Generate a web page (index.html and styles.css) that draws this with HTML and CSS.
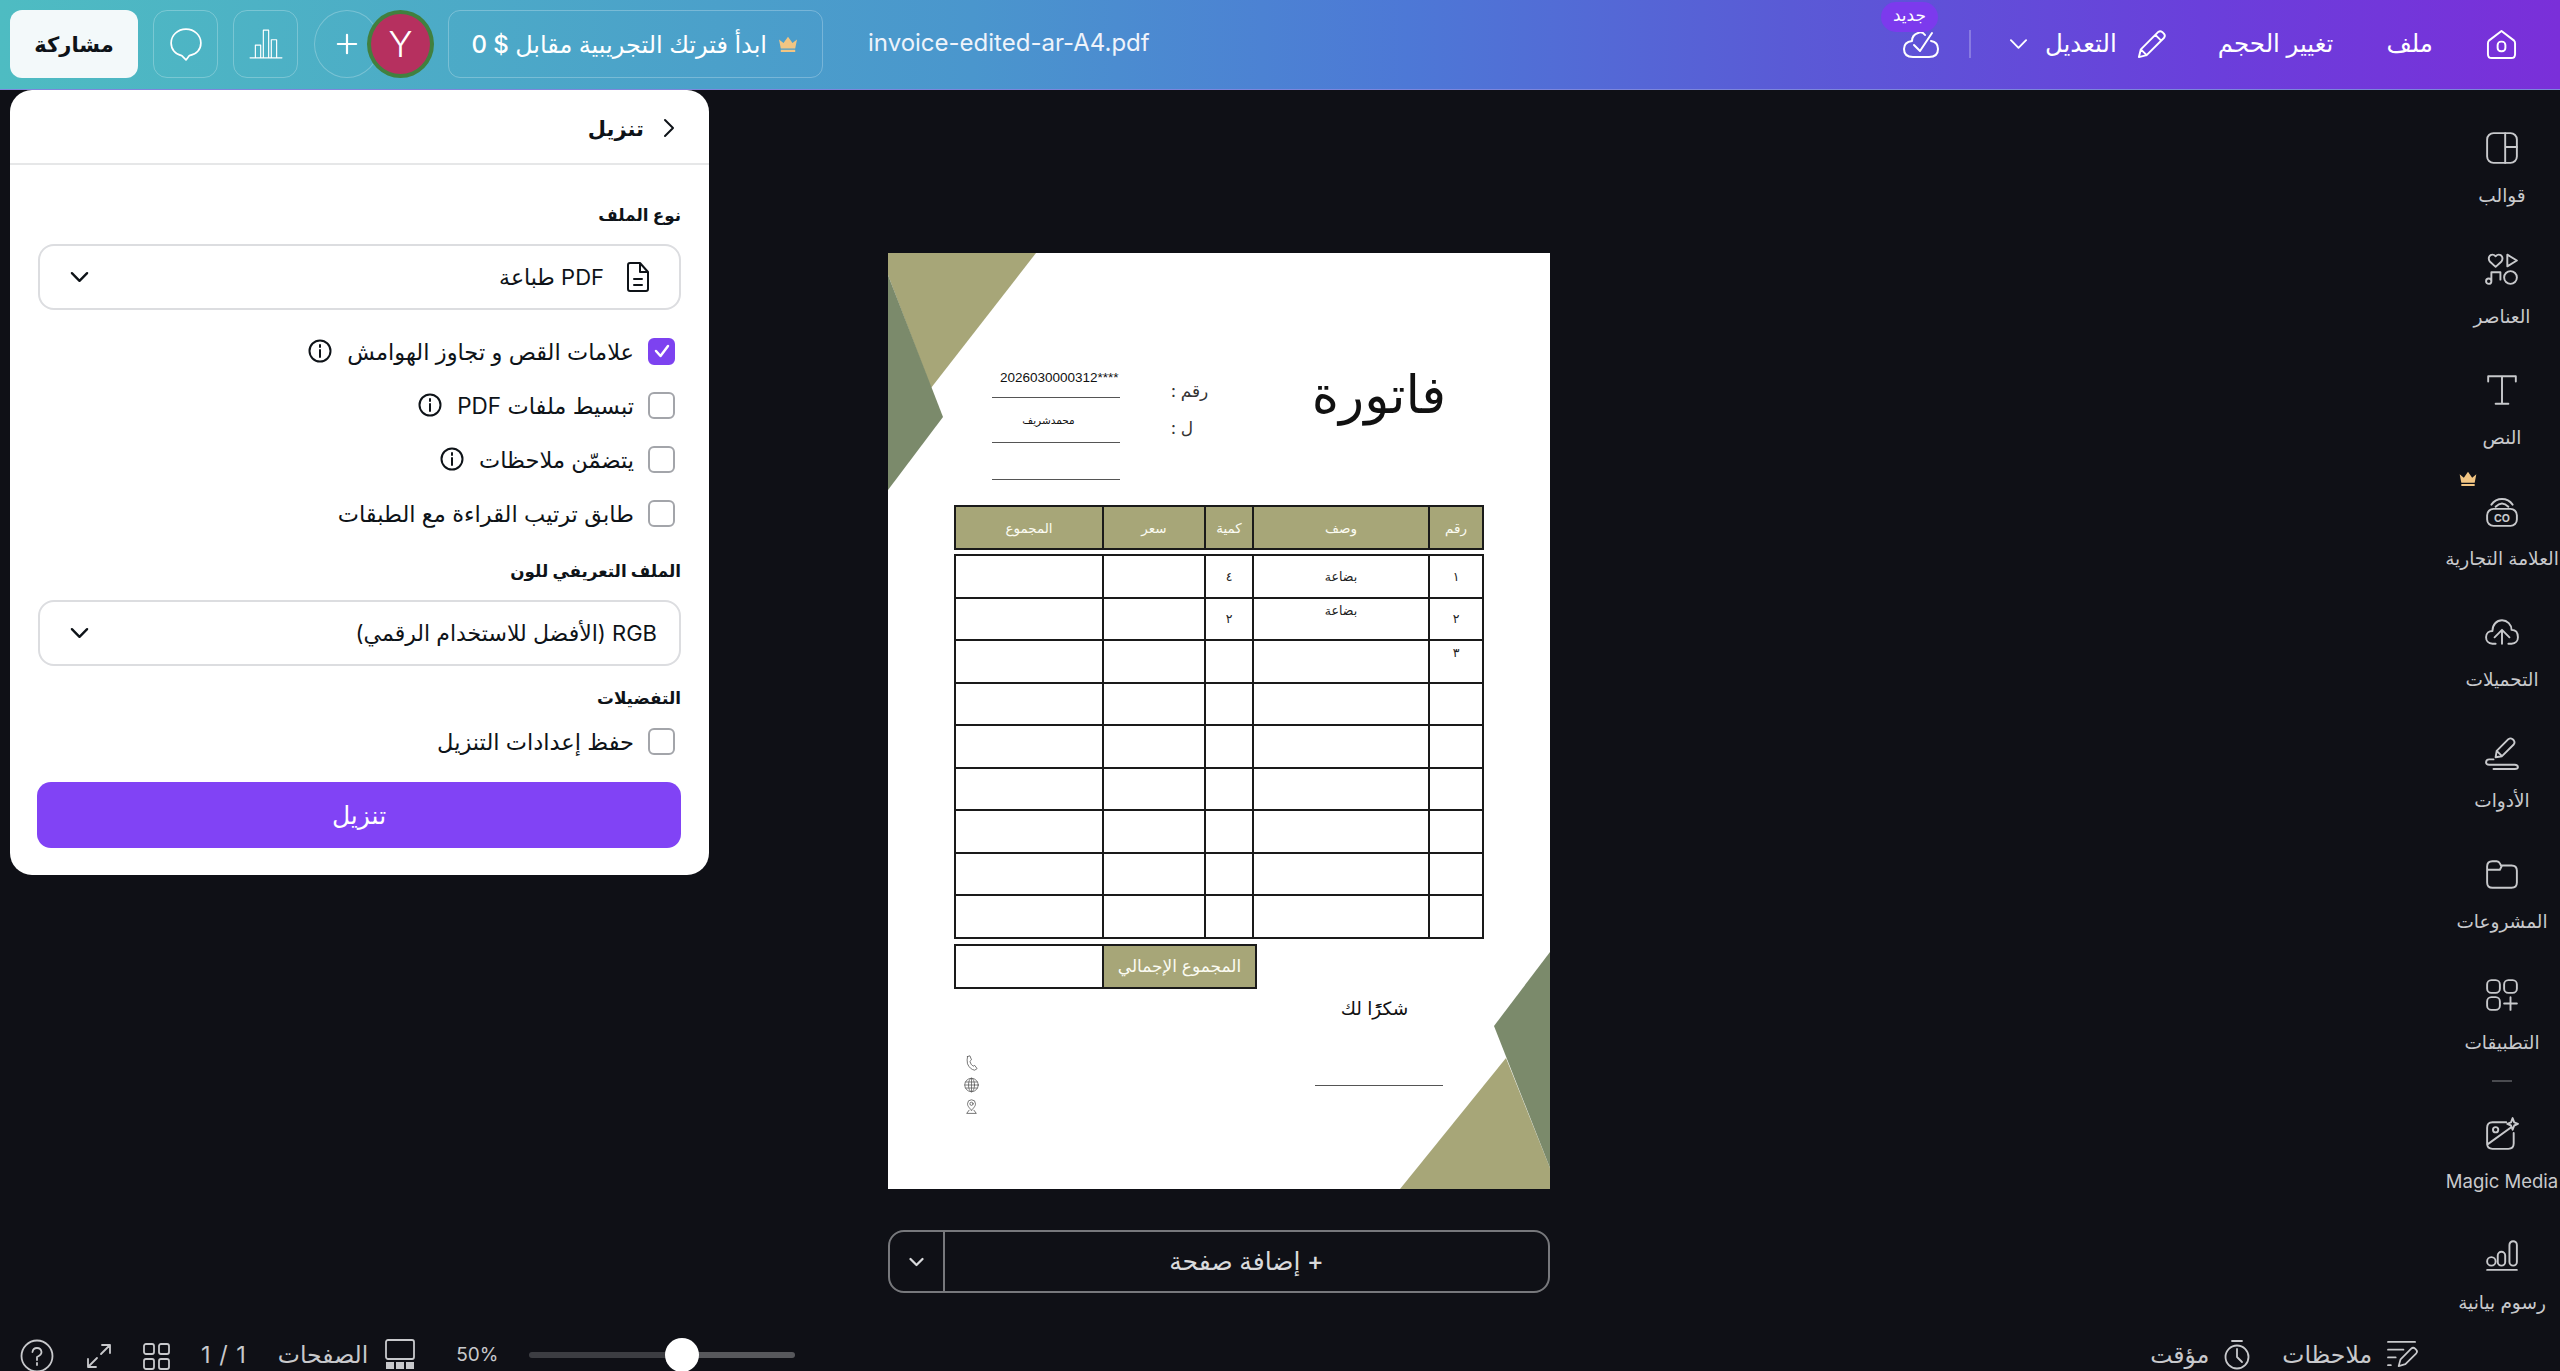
FILE: index.html
```html
<!DOCTYPE html>
<html lang="ar" dir="rtl">
<head>
  <meta charset="UTF-8">
  <title>invoice-edited-ar-A4.pdf</title>
  <link rel="stylesheet" href="styles.css">
</head>
<body>
  <header class="topbar">
    <div class="topbar-group topbar-right">
      <svg class="ico-home" viewBox="0 0 32 32"><path d="M16 2 L29 12 Q30 13 30 15 V26 Q30 30 26 30 H6 Q2 30 2 26 V15 Q2 13 3 12Z"/><rect x="12" y="13" width="8" height="10" rx="3.5"/></svg>
      <span class="top-link link-file">ملف</span>
      <span class="top-link link-resize">تغيير الحجم</span>
      <span class="top-edit">
        <svg class="ico-pencil" viewBox="0 0 32 32"><path d="M3 29 L5 21 L23 3 Q25 1.500 27 3 L29 5 Q30.500 7 29 9 L11 27Z M5 21 L11 27 M20 6 L26 12"/></svg>
        <span class="top-link">التعديل</span>
        <svg class="ico-chev-top" viewBox="0 0 20 12"><path d="M2 2 L10 10 L18 2"/></svg>
      </span>
      <span class="top-divider"></span>
      <span class="cloud-wrap">
        <svg class="ico-cloud" viewBox="0 0 36 28"><path d="M10 27 H26 Q35 27 35 19 Q35 12 28 11 M22 5 Q19 1 15 3 Q9 5 9 11 Q1 12 1 19 Q1 27 10 27"/><path d="M11 15 L17 21 L29 3"/></svg>
        <span class="new-badge">جديد</span>
      </span>
    </div>
    <div class="topbar-group topbar-left">
      <span class="file-name" dir="ltr">invoice-edited-ar-A4.pdf</span>
      <span class="trial-btn">
        <svg class="ico-crown" viewBox="0 0 24 20"><path d="M2 5 L7 9 L12 2 L17 9 L22 5 L20 15 H4Z M4 16.500 H20 V19 H4Z"/></svg>
        ابدأ فترتك التجريبية مقابل $ 0
      </span>
      <span class="avatar">Y</span>
      <span class="plus-btn">
        <svg viewBox="0 0 24 24"><path d="M12 2 V22 M2 12 H22"/></svg>
      </span>
      <span class="icon-btn">
        <svg class="ico-bars" viewBox="0 0 32 32"><path d="M1 29 H31 M6 29 V17 H11 V29 M13.500 29 V3 H18.500 V29 M21 29 V12 H26 V29"/></svg>
      </span>
      <span class="icon-btn">
        <svg viewBox="0 0 32 32"><path d="M16 2 C8 2 2 8 2 15 C2 21 6 26 12 27 L16 31 L19 27 C26 26 30 21 30 15 C30 8 24 2 16 2Z"/></svg>
      </span>
      <span class="share-btn">مشاركة</span>
    </div>
  </header>

  <div class="workspace">
    <nav class="sidebar">
      <div class="side-item">
        <svg viewBox="0 0 32 32"><rect x="2" y="2" width="28" height="28" rx="6"/><path d="M19 2 V30 M19 15 H30"/></svg>
        <span>قوالب</span>
      </div>
      <div class="side-item">
        <svg viewBox="0 0 32 32"><path d="M10 14 L4.500 9 C2.500 6 4 2.500 7 2.500 C8.500 2.500 10 4 10 4 C10 4 11.500 2.500 13 2.500 C16 2.500 17.500 6 15.500 9Z M21 2.500 L30 8 L21 13.500Z M6 27.500 a2.500 2.500 0 1 1 -5 0 a2.500 2.500 0 1 1 5 0 M6 27.500 V19 H14.500 V26"/><circle cx="24" cy="24" r="6"/></svg>
        <span>العناصر</span>
      </div>
      <div class="side-item">
        <svg viewBox="0 0 32 32"><path d="M3 8 V3 H29 V8 M16 3 V29 M10 29 H22"/></svg>
        <span>النص</span>
      </div>
      <div class="side-item">
        <svg class="ico-crown side-crown" viewBox="0 0 24 20"><path d="M2 5 L7 9 L12 2 L17 9 L22 5 L20 15 H4Z M4 16.500 H20 V19 H4Z"/></svg>
        <svg viewBox="0 0 32 32"><rect x="2" y="14" width="28" height="16" rx="6"/><path d="M6 10 C11 3 21 3 26 10 M10 12 C14 8 18 8 22 12"/><text class="co-mark" x="16" y="26" text-anchor="middle">CO</text></svg>
        <span>العلامة التجارية</span>
      </div>
      <div class="side-item">
        <svg viewBox="0 0 32 32"><path d="M10 27 H7 C3 27 1 24 1 21 C1 17 4 15 7 15 C7 9 11 5 16 5 C21 5 25 9 25 14 C29 14 31 17 31 21 C31 24 29 27 25 27 H22 M9 21 L16 14 L23 21 M16 14 V27"/></svg>
        <span>التحميلات</span>
      </div>
      <div class="side-item">
        <svg viewBox="0 0 32 32"><path d="M10 20 L11 14 L22 3 Q24 1.500 26 3 L27 4 Q28.500 6 27 8 L16 19Z M11 14 L16 19 M8 22 H4 Q1 22 1 25 Q1 27 4 27 H28 Q31 27 31 29.500 Q31 31 28 31 H8"/></svg>
        <span>الأدوات</span>
      </div>
      <div class="side-item">
        <svg viewBox="0 0 32 32"><path d="M2 9 Q2 4 7 4 H11 Q13 4 14 6 L15 8 H25 Q30 8 30 13 V24 Q30 29 25 29 H7 Q2 29 2 24Z M2 12 H14 L16 8"/></svg>
        <span>المشروعات</span>
      </div>
      <div class="side-item side-apps">
        <svg viewBox="0 0 32 32"><rect x="2" y="2" width="12" height="12" rx="4"/><rect x="18" y="2" width="12" height="12" rx="4"/><rect x="2" y="18" width="12" height="12" rx="4"/><path d="M24 18 V30 M18 24 H30"/></svg>
        <span>التطبيقات</span>
      </div>
      <div class="side-rule"></div>
      <div class="side-item">
        <svg viewBox="0 0 32 32"><path d="M20 5 H7 Q2 5 2 10 V25 Q2 30 7 30 H22 Q27 30 27 25 V15 M2 26 L27 8"/><circle cx="10" cy="12" r="2.500"/><path class="spark" d="M26 1 L27.500 5 L31 6.500 L27.500 8 L26 12 L24.500 8 L21 6.500 L24.500 5Z"/></svg>
        <span dir="ltr">Magic Media</span>
      </div>
      <div class="side-item">
        <svg viewBox="0 0 32 32"><circle cx="6" cy="22" r="4"/><rect x="12" y="13" width="7" height="13" rx="3.500"/><rect x="23" y="3" width="7" height="23" rx="3.500"/><path d="M2 30 H30"/></svg>
        <span>رسوم بيانية</span>
      </div>
    </nav>

    <main class="canvas">
      <div class="doc">
        <svg class="doc-art" viewBox="0 0 662 936">
          <polygon class="tan" points="0,0 148,0 43,135 0,22"/>
          <polygon class="sage" points="0,22 55,164 0,237"/>
          <polygon class="tan" points="618,805 662,915 662,936 512,936"/>
          <polygon class="sage" points="662,699 606,773 662,915"/>
        </svg>

        <div class="doc-title">فاتورة</div>
        <div class="doc-field field-no">رقم :</div>
        <div class="doc-field field-to">ل :</div>
        <div class="doc-serial" dir="ltr">2026030000312****</div>
        <div class="doc-name">محمدشريف</div>
        <div class="doc-line line-a"></div>
        <div class="doc-line line-b"></div>
        <div class="doc-line line-c"></div>

        <div class="doc-tables">
          <table class="grid grid-head">
            <tr>
              <th class="col-no">رقم</th><th class="col-desc">وصف</th><th class="col-qty">كمية</th><th class="col-price">سعر</th><th class="col-sum">المجموع</th>
            </tr>
          </table>
          <table class="grid grid-body">
            <tr><td class="col-no">١</td><td class="col-desc">بضاعة</td><td class="col-qty">٤</td><td class="col-price"></td><td class="col-sum"></td></tr>
            <tr><td class="col-no">٢</td><td class="col-desc cell-high">بضاعة</td><td class="col-qty">٢</td><td class="col-price"></td><td class="col-sum"></td></tr>
            <tr><td class="col-no cell-high">٣</td><td></td><td></td><td></td><td></td></tr>
            <tr><td></td><td></td><td></td><td></td><td></td></tr>
            <tr><td></td><td></td><td></td><td></td><td></td></tr>
            <tr><td></td><td></td><td></td><td></td><td></td></tr>
            <tr><td></td><td></td><td></td><td></td><td></td></tr>
            <tr><td></td><td></td><td></td><td></td><td></td></tr>
            <tr><td></td><td></td><td></td><td></td><td></td></tr>
          </table>
          <table class="grid grid-total">
            <tr><th class="col-label">المجموع الإجمالي</th><td class="col-sum"></td></tr>
          </table>
        </div>

        <div class="doc-thanks">شكرًًًا لك</div>
        <div class="doc-line line-sign"></div>

        <div class="doc-contacts">
          <svg viewBox="0 0 16 20"><path d="M3 2 L6 1 L8 6 L6 8 Q7 12 10 14 L12 13 L15 17 L12 19 Q6 18 3 11 Q2 6 3 2Z"/></svg>
          <svg viewBox="0 0 20 20"><circle cx="10" cy="10" r="9"/><ellipse cx="10" cy="10" rx="4" ry="9"/><path d="M1 10 H19 M2 6 H18 M2 14 H18 M10 1 V19"/></svg>
          <svg viewBox="0 0 16 20"><path d="M8 14 C4 10 3 8 3 6 A5 5 0 0 1 13 6 C13 8 12 10 8 14Z"/><circle cx="8" cy="6" r="2"/><path d="M5 14 L2 18 H14 L11 14"/></svg>
        </div>
      </div>

      <div class="add-page">
        <span class="add-main">+ إضافة صفحة</span>
        <span class="add-more"><svg viewBox="0 0 20 12"><path d="M2 2 L10 10 L18 2"/></svg></span>
      </div>
    </main>

    <section class="panel">
      <div class="panel-head">
        <svg viewBox="0 0 12 20"><path d="M2 2 L10 10 L2 18"/></svg>
        <span>تنزيل</span>
      </div>
      <div class="panel-body">
        <div class="panel-label">نوع الملف</div>
        <div class="select">
          <span class="select-value">
            <svg class="ico-doc" viewBox="0 0 24 32"><path d="M2 4 Q2 2 4 2 H14 L22 11 V28 Q22 30 20 30 H4 Q2 30 2 28Z M14 2 V11 H22 M8 18 H16 M8 24 H16"/></svg>
            PDF طباعة
          </span>
          <svg class="ico-chev" viewBox="0 0 20 12"><path d="M2 2 L10 10 L18 2"/></svg>
        </div>

        <div class="checks">
          <label class="check-row">
            <span class="box box-on"><svg viewBox="0 0 20 20"><path d="M4 10 L8.500 15 L16 5"/></svg></span>
            <span>علامات القص و تجاوز الهوامش</span>
            <svg class="ico-info" viewBox="0 0 24 24"><circle cx="12" cy="12" r="10.500"/><path d="M12 11 V18 M12 6 V8"/></svg>
          </label>
          <label class="check-row">
            <span class="box"></span>
            <span>تبسيط ملفات PDF</span>
            <svg class="ico-info" viewBox="0 0 24 24"><circle cx="12" cy="12" r="10.500"/><path d="M12 11 V18 M12 6 V8"/></svg>
          </label>
          <label class="check-row">
            <span class="box"></span>
            <span>يتضمّن ملاحظات</span>
            <svg class="ico-info" viewBox="0 0 24 24"><circle cx="12" cy="12" r="10.500"/><path d="M12 11 V18 M12 6 V8"/></svg>
          </label>
          <label class="check-row">
            <span class="box"></span>
            <span>طابق ترتيب القراءة مع الطبقات</span>
          </label>
        </div>

        <div class="panel-label label-color">الملف التعريفي للون</div>
        <div class="select select-plain">
          <span class="select-value">RGB (الأفضل للاستخدام الرقمي)</span>
          <svg class="ico-chev" viewBox="0 0 20 12"><path d="M2 2 L10 10 L18 2"/></svg>
        </div>

        <div class="panel-label label-prefs">التفضيلات</div>
        <label class="check-row row-prefs">
          <span class="box"></span>
          <span>حفظ إعدادات التنزيل</span>
        </label>

        <button class="download-btn">تنزيل</button>
      </div>
    </section>
  </div>

  <footer class="bottombar">
    <div class="bottom-group bottom-right">
      <svg class="bot-ico ico-notes" viewBox="0 0 32 32"><path d="M1 3 H29 M1 11 H17 M1 19 H9 M1 27 H4 M12 28 L14 21 L25 10 Q27 8 29 10 L30 11 Q32 13 30 15 L19 26Z"/></svg>
      <span class="bot-text">ملاحظات</span>
      <svg class="bot-ico ico-timer" viewBox="0 0 26 32"><circle cx="13" cy="18" r="11.500"/><path d="M8 2 H18 M13 10 V18 L18 23"/></svg>
      <span class="bot-text">مؤقت</span>
    </div>
    <div class="bottom-group bottom-left">
      <div class="zoom-slider"><span class="zoom-knob"></span></div>
      <span class="bot-text zoom-value">50%</span>
      <svg class="bot-ico ico-pages" viewBox="0 0 30 30"><rect x="1" y="1" width="28" height="19" rx="2"/><path class="fill" d="M1 23 H9 V30 H1Z M11 23 H19 V30 H11Z M21 23 H29 V30 H21Z"/></svg>
      <span class="bot-text">الصفحات</span>
      <span class="bot-text page-count" dir="ltr">1 / 1</span>
      <svg class="bot-ico ico-grid" viewBox="0 0 27 27"><rect x="1" y="1" width="10" height="10" rx="2"/><rect x="16" y="1" width="10" height="10" rx="2"/><rect x="1" y="16" width="10" height="10" rx="2"/><rect x="16" y="16" width="10" height="10" rx="2"/></svg>
      <svg class="bot-ico ico-expand" viewBox="0 0 26 26"><path d="M16 2 H24 V10 M24 2 L15 11 M2 16 V24 H10 M2 24 L11 15"/></svg>
      <svg class="bot-ico ico-help" viewBox="0 0 34 34"><circle cx="17" cy="17" r="15.500"/><path d="M12.500 13 Q13 9 17 9 Q21 9 21.500 13 Q21.500 16 17 18 V21 M17 24 V26"/></svg>
    </div>
  </footer>
</body>
</html>
```

FILE: styles.css
```css
* {
  box-sizing: border-box;
}
html, body {
  height: 100%;
  margin: 0;
}
body {
  display: flex;
  flex-direction: column;
  height: 100vh;
  overflow: hidden;
  background: #0f1016;
  color: #fff;
  font-family: "Inter", "DejaVu Sans", sans-serif;
}
svg {
  display: block;
  flex: none;
  fill: none;
  stroke: currentColor;
  stroke-width: 2;
  stroke-linecap: round;
  stroke-linejoin: round;
}

/* top bar */
.topbar {
  display: flex;
  justify-content: space-between;
  align-items: center;
  flex: none;
  height: 90px;
  padding: 0 43px 1px 10px;
  background: linear-gradient(90deg, #4ebcc2 0%, #4a96cd 38%, #4d78d6 55%, #5a5ad6 70%, #6a3fdb 86%, #7a2fd9 100%);
  border-bottom: 1px solid #7d86db;
}
.topbar-group {
  display: flex;
  align-items: center;
}
.top-link {
  font-size: 24.500px;
  font-weight: 500;
  line-height: 30px;
  margin-bottom: 2px;
}
.ico-home {
  width: 31px;
  height: 31px;
}
.link-file {
  margin-right: 53px;
}
.link-resize {
  margin-right: 53px;
}
.top-edit {
  display: flex;
  align-items: center;
  margin-right: 51px;
}
.ico-pencil {
  width: 31px;
  height: 31px;
  margin-left: 19px;
}
.ico-chev-top {
  width: 19px;
  height: 12px;
  margin-right: 17px;
}
.top-divider {
  width: 2px;
  height: 28px;
  margin-right: 38px;
  background: rgba(255, 255, 255, 0.25);
}
.cloud-wrap {
  position: relative;
  margin-right: 30px;
}
.ico-cloud {
  width: 36px;
  height: 28px;
}
.new-badge {
  position: absolute;
  top: -28px;
  left: -22px;
  width: 57px;
  height: 30px;
  border-radius: 15px;
  background: #7c3aed;
  font-size: 17px;
  line-height: 26px;
  text-align: center;
}
.file-name {
  margin-left: 45px;
  font-size: 24px;
  line-height: 30px;
  margin-bottom: 2px;
  color: #eef3fb;
}
.trial-btn {
  display: flex;
  align-items: center;
  gap: 10px;
  height: 68px;
  width: 375px;
  padding: 0 23px;
  border: 1px solid rgba(255, 255, 255, 0.25);
  border-radius: 12px;
  margin-left: 14px;
  font-size: 24px;
  font-weight: 500;
  white-space: nowrap;
}
.ico-crown {
  width: 22px;
  height: 18px;
  fill: #f2c583;
  stroke: none;
}
.avatar {
  position: relative;
  display: flex;
  align-items: center;
  justify-content: center;
  width: 67px;
  height: 68px;
  border: 4px solid #41803f;
  border-radius: 50%;
  background: #b6305f;
  font-size: 36px;
  font-weight: 300;
}
.plus-btn {
  display: flex;
  align-items: center;
  justify-content: center;
  width: 66px;
  height: 68px;
  margin-right: -13px;
  margin-left: 16px;
  border: 1px solid rgba(255, 255, 255, 0.25);
  border-radius: 50%;
}
.plus-btn svg {
  width: 22px;
  height: 22px;
  stroke-width: 2.400;
}
.icon-btn {
  display: flex;
  align-items: center;
  justify-content: center;
  width: 65px;
  height: 68px;
  margin-left: 15px;
  border: 1px solid rgba(255, 255, 255, 0.25);
  border-radius: 14px;
}
.icon-btn svg {
  width: 34px;
  height: 34px;
  stroke-width: 1.600;
}
.icon-btn svg.ico-bars {
  stroke-width: 1.100;
}
.share-btn {
  display: flex;
  align-items: center;
  justify-content: center;
  width: 128px;
  height: 68px;
  border-radius: 12px;
  background: #f3f9fa;
  color: #0e1318;
  font-size: 21px;
  font-weight: 600;
}

/* workspace */
.workspace {
  position: relative;
  display: flex;
  flex: 1;
  min-height: 0;
}
.sidebar {
  display: flex;
  flex-direction: column;
  align-items: center;
  flex: none;
  width: 116px;
  padding-top: 40px;
}
.side-item {
  position: relative;
  display: flex;
  flex-direction: column;
  align-items: center;
  flex: none;
  height: 121px;
  width: 100%;
  color: #c8c9cc;
}
.side-item svg {
  width: 34px;
  height: 34px;
  margin-top: 1px;
  stroke-width: 1.800;
}
.side-item span {
  margin-top: 18px;
  font-size: 18.500px;
  line-height: 24px;
  white-space: nowrap;
}
.side-item svg.side-crown {
  position: absolute;
  top: -23px;
  left: 14px;
  width: 20px;
  height: 17px;
  margin: 0;
}
.co-mark {
  fill: currentColor;
  stroke: none;
  font-size: 10px;
  font-weight: 700;
}
.spark {
  fill: #0f1016;
}
.side-apps {
  height: 103px;
}
.side-rule {
  flex: none;
  width: 20px;
  height: 2px;
  margin-bottom: 34px;
  background: #4a4b50;
}
.canvas {
  display: flex;
  flex-direction: column;
  align-items: center;
  flex: 1;
  padding: 163px 6px 0 0;
}
.doc {
  position: relative;
  flex: none;
  width: 662px;
  height: 936px;
  background: #fff;
  color: #111;
}
.doc-art {
  position: absolute;
  inset: 0;
  width: 100%;
  height: 100%;
}
.tan {
  fill: #a7a678;
  stroke: none;
}
.sage {
  fill: #7b8a6b;
  stroke: none;
}
.doc-title {
  position: absolute;
  left: 421px;
  top: 107px;
  width: 140px;
  font-size: 52px;
  line-height: 70px;
  text-align: center;
}
.doc-field {
  position: absolute;
  font-size: 17px;
  line-height: 20px;
  color: #333;
}
.field-no {
  left: 283px;
  top: 128px;
}
.field-to {
  left: 283px;
  top: 165px;
}
.doc-serial {
  position: absolute;
  left: 112px;
  top: 117px;
  font-family: "Liberation Sans", sans-serif;
  font-size: 13.500px;
  line-height: 16px;
}
.doc-name {
  position: absolute;
  left: 131px;
  top: 160px;
  width: 59px;
  font-size: 10.500px;
  line-height: 16px;
  text-align: center;
  white-space: nowrap;
}
.doc-line {
  position: absolute;
  left: 104px;
  width: 128px;
  height: 1px;
  background: #555;
}
.line-a {
  top: 144px;
}
.line-b {
  top: 189px;
}
.line-c {
  top: 226px;
}
.line-sign {
  left: 427px;
  top: 832px;
}
.doc-tables {
  position: absolute;
  left: 66px;
  top: 252px;
  display: flex;
  flex-direction: column;
  align-items: flex-end;
  width: 528px;
}
.grid {
  border-collapse: collapse;
  table-layout: fixed;
  width: 528px;
}
.grid td, .grid th {
  padding: 0;
  border: 2px solid #1a1a1a;
  font-size: 12.500px;
  font-weight: 400;
  text-align: center;
  color: #222;
}
.grid th {
  background: #a7a678;
  color: #fbfbf2;
}
.grid-head th {
  height: 43px;
  font-size: 13.500px;
}
.col-no {
  width: 54px;
}
.col-desc {
  width: 176px;
}
.col-qty {
  width: 48px;
}
.col-price {
  width: 102px;
}
.col-sum {
  width: 148px;
}
.grid-body {
  margin-top: 4px;
}
.grid-body td {
  height: 42.500px;
}
.grid .cell-high {
  vertical-align: top;
  padding-top: 4px;
}
.grid-total {
  width: 301px;
  margin-top: 5px;
}
.grid-total th, .grid-total td {
  height: 43px;
}
.grid-total th {
  font-size: 17px;
}
.col-label {
  width: 153px;
}
.doc-thanks {
  position: absolute;
  left: 444px;
  top: 740px;
  width: 85px;
  font-size: 18.500px;
  line-height: 30px;
  text-align: center;
  white-space: nowrap;
}
.doc-contacts {
  position: absolute;
  left: 75px;
  top: 802px;
  display: flex;
  flex-direction: column;
  align-items: center;
  gap: 6px;
  width: 16px;
  color: #555;
}
.doc-contacts svg {
  width: 15px;
  height: 16px;
  stroke-width: 1;
}
.add-page {
  display: flex;
  flex: none;
  width: 662px;
  height: 63px;
  margin-top: 41px;
  border: 2px solid #77787c;
  border-radius: 16px;
  color: #d9dadc;
}
.add-main {
  flex: 1;
  font-size: 25px;
  font-weight: 500;
  line-height: 58px;
  text-align: center;
}
.add-more {
  display: flex;
  align-items: center;
  justify-content: center;
  width: 55px;
  border-right: 2px solid #77787c;
}
.add-more svg {
  width: 15px;
  height: 10px;
  stroke-width: 3;
}

/* download panel */
.panel {
  position: absolute;
  top: 0;
  left: 10px;
  width: 699px;
  height: 785px;
  border-radius: 22px;
  background: #fff;
  color: #0e1318;
}
.panel-head {
  display: flex;
  align-items: center;
  gap: 19px;
  height: 75px;
  padding: 3px 34px 0;
  border-bottom: 2px solid #e6e7e8;
  font-size: 21px;
  font-weight: 700;
}
.panel-head svg {
  width: 12px;
  height: 20px;
}
.panel-body {
  padding: 36px 28px 0;
}
.panel-label {
  font-size: 16.800px;
  font-weight: 600;
  line-height: 28px;
}
.select {
  display: flex;
  align-items: center;
  justify-content: space-between;
  height: 66px;
  margin-top: 15px;
  padding: 0 22px 0 30px;
  border: 2px solid #dcdde0;
  border-radius: 16px;
}
.select-value {
  display: flex;
  align-items: center;
  gap: 22px;
  font-size: 22px;
}
.ico-doc {
  width: 24px;
  height: 32px;
  margin-right: 7px;
}
.ico-chev {
  width: 19px;
  height: 12px;
  stroke-width: 2.500;
}
.checks {
  display: flex;
  flex-direction: column;
  gap: 26px;
  margin-top: 27px;
}
.check-row {
  display: flex;
  align-items: center;
  gap: 14px;
  height: 28px;
  padding-right: 6px;
  font-size: 22.500px;
}
.box {
  display: flex;
  align-items: center;
  justify-content: center;
  flex: none;
  width: 27px;
  height: 27px;
  border: 2px solid #a3a5aa;
  border-radius: 6px;
}
.box-on {
  border-color: #7d42f0;
  background: #7d42f0;
  color: #fff;
}
.box-on svg {
  width: 20px;
  height: 20px;
  stroke-width: 2.500;
}
.ico-info {
  width: 24px;
  height: 24px;
  margin-right: 1px;
}
.label-color {
  margin-top: 30px;
}
.select-plain {
  margin-top: 15px;
}
.label-prefs {
  margin-top: 18px;
}
.row-prefs {
  margin-top: 15px;
}
.download-btn {
  display: block;
  width: 644px;
  height: 66px;
  margin-top: 27px;
  border: 0;
  border-radius: 14px;
  background: #8143f5;
  color: #fff;
  font-family: inherit;
  font-size: 25px;
  font-weight: 500;
}

/* bottom bar */
.bottombar {
  position: absolute;
  left: 0;
  right: 0;
  bottom: 0;
  display: flex;
  justify-content: space-between;
  height: 41px;
  padding: 9px 142px 0 20px;
  color: #c8c9cc;
}
.bottom-group {
  display: flex;
  align-items: flex-start;
}
.bot-text {
  font-size: 23.500px;
  line-height: 32px;
  white-space: nowrap;
}
.bot-ico {
  stroke-width: 1.800;
}
.ico-notes {
  width: 31px;
  height: 31px;
  margin-left: 15px;
}
.ico-timer {
  width: 26px;
  height: 32px;
  margin: 0 32px 0 15px;
}
.zoom-slider {
  position: relative;
  width: 266px;
  height: 6px;
  margin: 13px 0 0 31px;
  border-radius: 3px;
  background: linear-gradient(90deg, #3c3d42 58%, #57585c 58%);
}
.zoom-knob {
  position: absolute;
  top: -14px;
  left: 136px;
  width: 34px;
  height: 34px;
  border-radius: 50%;
  background: #fff;
}
.zoom-value {
  margin-left: 41px;
  font-size: 19px;
}
.ico-pages {
  width: 30px;
  height: 30px;
  margin-left: 17px;
}
.ico-pages .fill {
  fill: currentColor;
  stroke: none;
}
.page-count {
  margin: 0 31px;
  letter-spacing: 1px;
}
.ico-grid {
  width: 27px;
  height: 27px;
  margin: 4px 0 0 31px;
}
.ico-expand {
  width: 26px;
  height: 26px;
  margin: 4px 0 0 32px;
}
.ico-help {
  width: 34px;
  height: 34px;
}
```
